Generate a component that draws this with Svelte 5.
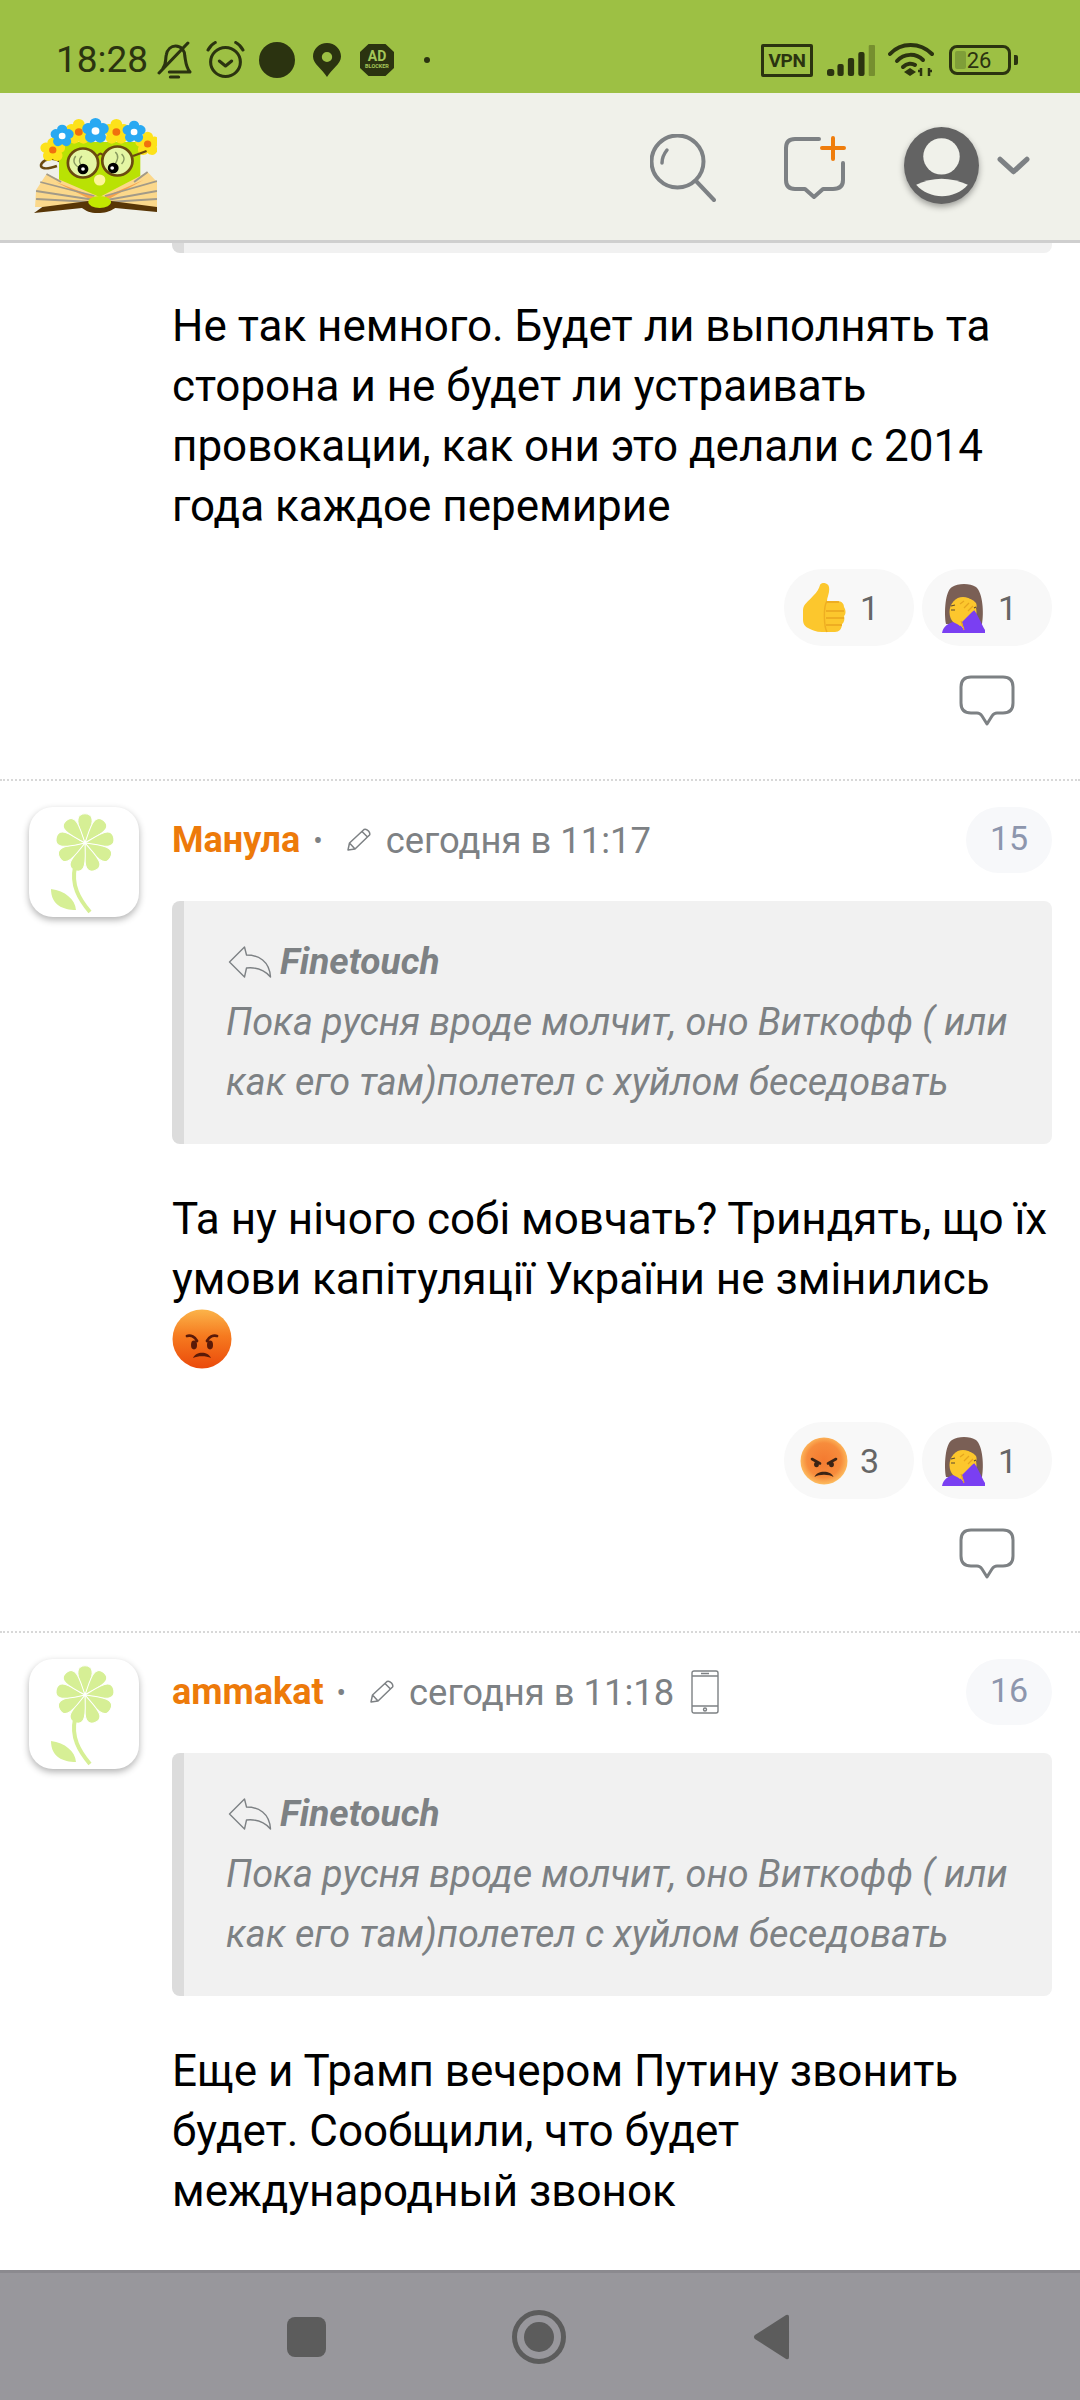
<script>
  const PETALS = [0, 40, 80, 120, 160, 200, 240, 280, 320];
  const comments = [
    {
      name: 'Манула', time: 'сегодня в 11:17', num: 15, phone: false,
      lines: ['Та ну нічого собі мовчать? Триндять, що їх', 'умови капітуляції України не змінились'],
      angry: true, first: 'pout', count: 3
    },
    {
      name: 'ammakat', time: 'сегодня в 11:18', num: 16, phone: true,
      lines: ['Еще и Трамп вечером Путину звонить', 'будет. Сообщили, что будет', 'международный звонок'],
      angry: false
    }
  ];
</script>

{#snippet thumbs()}
  <svg class="emo" viewBox="0 0 48 50">
    <path d="M3 27 C3 21 9 18 13 13 C17 9 19 6 20 2 C21 -1 28 -1 29 4 C30 10 27 14 27 18 L37 18 C42 18 44 21 44 24 C46 27 46 31 44 33 C45 36 44 40 42 41 C42 46 39 49 35 49 L22 49 C16 49 12 47 8 45 C4 43 3 40 3 36Z" fill="#fcc72d"/>
    <path d="M27 19 H39 M26 28 H44 M26 35 H44 M26 42 H42" stroke="#e9a51f" stroke-width="1.6" fill="none"/>
    <path d="M27 18 C23 24 24 44 27 49" stroke="#eeae22" stroke-width="1.4" fill="none"/>
  </svg>
{/snippet}

{#snippet facepalm()}
  <svg class="emo" viewBox="0 0 48 50">
    <path d="M8 41 C6 30 7 8 14 4 C20 0 32 0 38 4 C45 10 46 30 44 41Z" fill="#7a5f55"/>
    <ellipse cx="25" cy="29" rx="13.500" ry="15" fill="#fcc72d"/>
    <path d="M4 50 C5 44 9 41 15 39 L23 43 L30 50Z" fill="#7a3ff2"/>
    <path d="M27 50 L24 39 L36 27 C40 32 44 42 47 47 L47 50Z" fill="#7a3ff2"/>
    <path d="M17 19 C23 13 33 14 38 20 C40 25 37 27 33 29 L25 36 L22 43 C18 40 18 36 20 32 C17 28 16 23 17 19Z" fill="#fcc72d"/>
    <path d="M22 21 L26 18 M26 25 L31 20 M30 28 L35 23 M23 38 L26 47" stroke="#e6a51e" stroke-width="1.200" fill="none"/>
    <path d="M13 23 l4 -1 M13 27 h4 M36 25 l2 -1" stroke="#5b4a30" stroke-width="1.200"/>
  </svg>
{/snippet}

{#snippet pout()}
  <svg class="emo" viewBox="0 0 48 48">
    <defs>
      <radialGradient id="pg" cx="50%" cy="48%" r="52%">
        <stop offset="0%" stop-color="#f47a30"/><stop offset="70%" stop-color="#f78c3c"/><stop offset="100%" stop-color="#fdbd60"/>
      </radialGradient>
    </defs>
    <circle cx="24" cy="24" r="23.500" fill="url(#pg)"/>
    <path d="M12 22 L20 26.500 M36 22 L28 26.500" stroke="#3c2415" stroke-width="2.600" stroke-linecap="round"/>
    <ellipse cx="16.500" cy="27.500" rx="2.400" ry="2.800" fill="#3c2415"/><ellipse cx="31.500" cy="27.500" rx="2.400" ry="2.800" fill="#3c2415"/>
    <path d="M14.500 40 C17 33 31 33 33.500 40 C29 37 19 37 14.500 40Z" fill="#3c2415"/>
  </svg>
{/snippet}

{#snippet rage()}
  <svg class="rage" viewBox="0 0 60 60">
    <defs>
      <linearGradient id="rg" x1="0" y1="0" x2="0" y2="1">
        <stop offset="0%" stop-color="#fbb44a"/><stop offset="45%" stop-color="#f67a1f"/><stop offset="100%" stop-color="#ea4a0b"/>
      </linearGradient>
    </defs>
    <circle cx="30" cy="30" r="29.500" fill="url(#rg)"/>
    <path d="M15 27 C19 26 23 28 25 32 M45 27 C41 26 37 28 35 32" stroke="#5a1a08" stroke-width="2.800" fill="none" stroke-linecap="round"/>
    <ellipse cx="22" cy="36" rx="3" ry="4.400" fill="#5a1a08"/><ellipse cx="38" cy="36" rx="3" ry="4.400" fill="#5a1a08"/>
    <path d="M21 49 C24 42 36 42 39 49 C34 46.500 26 46.500 21 49Z" fill="#5a1a08"/>
  </svg>
{/snippet}

{#snippet pills(kind, count)}
  <div class="pills">
    <div class="pill">
      {#if kind === 'pout'}{@render pout()}{:else}{@render thumbs()}{/if}
      <span>{count}</span>
    </div>
    <div class="pill">{@render facepalm()}<span>1</span></div>
  </div>
  <div class="reply-row">
    <svg class="bubble" viewBox="0 0 56 52" fill="none" stroke="#7d8184" stroke-width="3">
      <path d="M12 2 H44 Q54 2 54 12 V28 Q54 38 44 38 H38 Q35 38 33 41 L28 49 L23 41 Q21 38 18 38 H12 Q2 38 2 28 V12 Q2 2 12 2Z" stroke-linejoin="round"/>
    </svg>
  </div>
{/snippet}

{#snippet pencil()}
  <svg class="pencil" viewBox="0 0 26 24" fill="none" stroke="#7d8184" stroke-width="1.500" stroke-linejoin="round">
    <path d="M2 22 L3.500 15 L18 1.500 Q20 0.500 22.500 3 Q24.500 5.500 23.500 7 L9 21 Z M3.500 15 L9 21 M16 3.500 L21.500 9"/>
  </svg>
{/snippet}

{#snippet flower()}
  <svg class="flower" viewBox="0 0 110 110">
    <g fill="#d6ef95">
      {#each PETALS as a}
        <path d="M56 36 C53 28 48 18 49 12 C50 5 62 5 63 12 C64 18 59 28 56 36Z" transform="rotate({a} 56 36)" stroke="#fff" stroke-width="1"/>
      {/each}
      <path d="M22 82 C36 84 46 92 47 103 C34 103 22 98 22 82Z"/>
    </g>
    <path d="M46 60 C42 78 50 92 61 105" stroke="#d6ef95" stroke-width="4" fill="none"/>
  </svg>
{/snippet}

{#snippet blossom(x, y, c, d, r)}
  <g>
    {#each [0, 72, 144, 216, 288] as a}
      <circle cx={x} cy={y - r} r={r * 0.75} fill={c} transform="rotate({a} {x} {y})"/>
    {/each}
    <circle cx={x} cy={y} r={r * 0.5} fill={d}/>
  </g>
{/snippet}

<div class="phone">
  <div class="status">
    <span class="time">18:28</span>
    <svg class="s-bell" viewBox="0 0 34 38" preserveAspectRatio="none" fill="none" stroke="#2b3310" stroke-width="3" stroke-linecap="round" stroke-linejoin="round">
      <path d="M6 27 C9 23 8 19 9 14 C10 8 14 5 18 5 C24 5 27 10 27 15 C28 21 28 26 32 31 H12"/>
      <path d="M2 32 L30 2"/>
      <path d="M13 36 H21"/>
    </svg>
    <svg class="s-alarm" viewBox="0 0 38 38" preserveAspectRatio="none" fill="none" stroke="#2b3310" stroke-width="3" stroke-linecap="round" stroke-linejoin="round">
      <circle cx="19" cy="21" r="14.500"/>
      <path d="M13 20 L19 25 L25 20"/>
      <path d="M2 9 C4 5 6 3 9 1.500 M36 9 C34 5 32 3 29 1.500"/>
    </svg>
    <div class="s-dot"></div>
    <svg class="s-pin" viewBox="0 0 27 34" preserveAspectRatio="none">
      <path fill-rule="evenodd" d="M13.500 0 C21 0 27 6 27 13.500 C27 21 18 26 13.500 34 C9 26 0 21 0 13.500 C0 6 6 0 13.500 0Z M13.500 9 A5 5 0 1 0 13.500 19 A5 5 0 1 0 13.500 9Z" fill="#2b3310"/>
    </svg>
    <div class="s-ad"><b>AD</b><i>BLOCKER</i></div>
    <div class="s-small"></div>
    <div class="s-space"></div>
    <div class="s-vpn">VPN</div>
    <svg class="s-sig" viewBox="0 0 46 31" preserveAspectRatio="none">
      <g fill="#2b3310">
        <rect x="0" y="24" width="7" height="7" rx="2.500"/>
        <rect x="10" y="19" width="6" height="12" rx="2"/>
        <rect x="20" y="13" width="6" height="18" rx="2"/>
        <rect x="30" y="7" width="6" height="24" rx="2"/>
      </g>
      <rect x="40" y="0" width="6" height="31" rx="1" fill="#768f2f"/>
    </svg>
    <svg class="s-wifi" viewBox="0 0 46 34" fill="none" stroke="#2b3310" stroke-width="4" stroke-linecap="round">
      <path d="M2 11 C13 -1 32 -1 44 11"/>
      <path d="M9 18 C16 10 28 10 35 17"/>
      <path d="M15 24 C19 20 24 20 27 22"/>
      <path d="M16 29 L22 25 L28 29 L22 33Z" fill="#2b3310" stroke="none"/>
      <path d="M33 25 V33 M30 28 H33 M41 25 V33 M41 28 H44" stroke-width="2.500" stroke-linecap="butt"/>
    </svg>
    <div class="s-bat">
      <div class="s-body"><div class="s-fill"></div><span>26</span></div>
      <div class="s-nub"></div>
    </div>
  </div>

  <header class="top">
    <svg class="logo" viewBox="34 113 118 96" preserveAspectRatio="none">
      <path d="M60 158 C44 146 28 172 56 162" fill="none" stroke="#6b4a10" stroke-width="2.500"/>
      <rect x="58" y="138" width="78" height="52" fill="#b9e204"/>
      <path d="M58 185 L97 198 L136 185 V172 L97 190 L58 172Z" fill="#b9e204"/>
      {@render blossom(52, 146, '#fde21a', '#f0700e', 7)}
      {@render blossom(143, 140, '#fde21a', '#f0700e', 7)}
      {@render blossom(77, 128, '#fde21a', '#f0700e', 7.500)}
      {@render blossom(113, 128, '#fde21a', '#f0700e', 7.500)}
      {@render blossom(61, 132, '#29a9f2', '#fff', 6.500)}
      {@render blossom(93, 127, '#29a9f2', '#fff', 7.500)}
      {@render blossom(130, 128, '#29a9f2', '#fff', 6.500)}
      <g stroke="#6b4a10" stroke-width="2.600" fill="#e4f6a4">
        <circle cx="81" cy="159" r="14.500"/><circle cx="114" cy="157" r="14.500"/>
      </g>
      <path d="M95 152 Q97 148 100 151 M129 152 L142 147" stroke="#6b4a10" stroke-width="2.200" fill="none"/>
      <path d="M74 152 C70 158 74 162 78 164 M80 152 C76 156 78 160 80 162 M112 148 C116 152 114 156 112 160 M118 150 C122 154 120 158 118 160" stroke="#889a60" stroke-width="1.400" fill="none"/>
      <circle cx="81" cy="165" r="5.200" fill="#000"/><circle cx="81" cy="165" r="1.800" fill="#fff"/>
      <circle cx="110" cy="164" r="5.200" fill="#000"/><circle cx="109" cy="164" r="1.800" fill="#fff"/>
      <circle cx="97" cy="176" r="5.500" fill="#fdf59a"/>
      <path d="M46 170 L97 193 L97 203 L35 203 L36 186Z M143 168 L152 178 L152 203 L97 203 L97 193Z" fill="#fbd88b"/>
      <path d="M55 178 L97 195 L139 176 L97 200Z" fill="#f6a24c"/>
      <path d="M40 178 L92 192 M36 187 L92 196 M36 195 L90 198 M152 177 L102 192 M152 187 L104 196 M152 195 L106 198 M46 170 L60 178 M143 168 L130 178" stroke="#a29a88" stroke-width="1.800"/>
      <path d="M34 209 L42 203 L86 197 L108 197 L152 203 L152 208 L112 204 C106 208 102 209 95 209 C88 209 84 207 80 204Z" fill="#583606"/>
      <ellipse cx="97" cy="198" rx="11" ry="6" fill="#c2e800"/>
    </svg>
    <div class="h-space"></div>
    <svg class="search" viewBox="0 0 66 68" fill="none" stroke="#7d8184" stroke-width="4" stroke-linecap="round">
      <circle cx="27.500" cy="27.500" r="26"/>
      <path d="M46 47 L64 66"/>
      <path d="M12 29 C12 24 13 21 17 16" stroke-width="3.500"/>
    </svg>
    <svg class="newc" viewBox="0 0 62 64" fill="none" stroke-linecap="round">
      <path d="M36 3 H12 Q3 3 3 12 V44 Q3 53 12 53 H22 L31 61 L40 53 H50 Q60 53 60 44 V27" stroke="#7d8184" stroke-width="4" stroke-linejoin="round"/>
      <path d="M39 12 H61 M50 2 V23" stroke="#ef7d0c" stroke-width="4"/>
    </svg>
    <div class="ava">
      <svg viewBox="0 0 74 76">
        <ellipse cx="37" cy="38" rx="37" ry="38" fill="#636363"/>
        <circle cx="37" cy="29" r="18" fill="#f0f1ea"/>
        <path d="M12 57 C28 49 46 49 63 57 C50 72 25 72 12 57Z" fill="#f0f1ea"/>
      </svg>
    </div>
    <svg class="chev" viewBox="0 0 32 18" fill="none" stroke="#7d8184" stroke-width="5" stroke-linecap="round" stroke-linejoin="round">
      <path d="M3 3 L16 15 L29 3"/>
    </svg>
  </header>

  <main class="feed">
    <div class="stub"></div>
    <div class="body first">
      <p>Не так немного. Будет ли выполнять та</p>
      <p>сторона и не будет ли устраивать</p>
      <p>провокации, как они это делали с 2014</p>
      <p>года каждое перемирие</p>
    </div>
    <div class="foot">{@render pills('thumb', 1)}</div>

    {#each comments as c}
      <article class="comment">
        <div class="side"><div class="uava">{@render flower()}</div></div>
        <div class="main">
          <div class="meta">
            <span class="name">{c.name}</span>
            <span class="sep">•</span>
            {@render pencil()}
            <span class="when">{c.time}</span>
            {#if c.phone}
              <svg class="mob" viewBox="0 0 28 44" fill="none" stroke="#7d8184" stroke-width="1.400">
                <rect x="1" y="1" width="26" height="42" rx="2"/>
                <path d="M1 6 H27 M1 36 H27 M10 3.500 H18"/><circle cx="14" cy="39.500" r="1.500"/>
              </svg>
            {/if}
            <span class="num">{c.num}</span>
          </div>
          <div class="quote">
            <div class="q-head">
              <svg class="q-ico" viewBox="0 0 43 32" fill="none" stroke="#7d8184" stroke-width="1.400" stroke-linejoin="round">
                <path d="M1 16 L16 1 L18 9 C30 9 41 15 42 31 C36 24 28 21 18 22 L16 31Z"/>
              </svg>
              <b>Finetouch</b>
            </div>
            <div>Пока русня вроде молчит, оно Виткофф ( или</div>
            <div>как его там)полетел с хуйлом беседовать</div>
          </div>
          <div class="body">
            {#each c.lines as l}<p>{l}</p>{/each}
            {#if c.angry}<p class="rage-line">{@render rage()}</p>{/if}
          </div>
          {#if c.first}<div class="foot inner">{@render pills(c.first, c.count)}</div>{/if}
        </div>
      </article>
    {/each}
  </main>

  <nav class="nav">
    <div class="n-sq"></div>
    <div class="n-home"><div></div></div>
    <svg class="n-back" viewBox="0 0 38 46" preserveAspectRatio="none"><path d="M2 21 L34 1 Q37 0 37 3 V43 Q37 46 34 45 L2 25 Q0 23 2 21Z" fill="#5c5c5c"/></svg>
  </nav>
</div>

<style>
  :global(body) { margin: 0; background: #fff; }
  .phone {
    width: 1080px; height: 2400px; overflow: hidden; display: flex; flex-direction: column;
    font-family: Roboto, "Noto Sans", sans-serif; background: #fff; color: #000;
  }
  .status {
    height: 93px; flex: none; background: #9dc044; display: flex; align-items: center;
    padding: 27px 0 0 56px; box-sizing: border-box; color: #2b3310;
  }
  .time { font-size: 37px; width: 92px; line-height: 40px; }
  .s-bell { width: 35px; height: 38px; margin-left: 9px; }
  .s-alarm { width: 39px; height: 38px; margin-left: 14px; }
  .s-dot { width: 36px; height: 36px; border-radius: 50%; background: #2b3310; margin-left: 14px; }
  .s-pin { width: 28px; height: 34px; margin-left: 18px; }
  .s-ad {
    width: 34px; height: 32px; margin-left: 19px; background: #2b3310;
    clip-path: polygon(25% 0, 75% 0, 100% 25%, 100% 75%, 75% 100%, 25% 100%, 0 75%, 0 25%);
    display: flex; flex-direction: column; align-items: center; justify-content: center; color: #a4c758; line-height: 1;
  }
  .s-ad b { font-size: 14px; line-height: 13px; }
  .s-ad i { font-size: 5.500px; font-style: normal; font-weight: 700; line-height: 7px; }
  .s-small { width: 6px; height: 6px; border-radius: 50%; background: #2b3310; margin-left: 30px; }
  .s-space { flex: 1; }
  .s-vpn {
    width: 52px; height: 33px; box-sizing: border-box; border: 3px solid #2b3310; border-radius: 2px;
    font-size: 19px; font-weight: 700; text-align: center; line-height: 27px; letter-spacing: -0.3px;
  }
  .s-sig { width: 48px; height: 31px; margin-left: 14px; }
  .s-wifi { width: 46px; height: 34px; margin-left: 13px; }
  .s-bat { display: flex; align-items: center; margin: 0 62px 0 15px; }
  .s-body {
    width: 62px; height: 30px; box-sizing: border-box; border: 3px solid #2b3310; border-radius: 8px;
    position: relative; text-align: center; font-size: 22px; line-height: 25px;
  }
  .s-fill { position: absolute; left: 3px; top: 3px; bottom: 3px; width: 11px; background: #7f9e38; border-radius: 2px; }
  .s-body span { position: relative; left: -1px; }
  .s-nub { width: 4px; height: 10px; background: #2b3310; border-radius: 0 2px 2px 0; margin-left: 3px; }

  .top {
    height: 150px; flex: none; box-sizing: border-box; background: #f0f1ea; border-bottom: 3px solid #cfcfcf;
    display: flex; align-items: center; padding: 0 50px 0 34px;
  }
  .logo { width: 123px; height: 96px; margin-top: -3px; }
  .h-space { flex: 1; }
  .search { width: 66px; height: 68px; margin-top: 2px; }
  .newc { width: 62px; height: 64px; overflow: visible; margin-left: 67px; margin-top: 2px; }
  .ava { width: 77px; height: 77px; margin-left: 58px; filter: drop-shadow(0 3px 3px rgba(0,0,0,.35)); margin-top: -3px; }
  .ava svg { width: 77px; height: 77px; display: block; }
  .chev { width: 33px; height: 19px; margin-left: 17px; margin-top: -2px; }

  .feed { flex: 1; overflow: hidden; min-height: 0; }
  .stub {
    height: 10px; margin: 0 28px 0 172px; background: #f1f1f1; border-left: 12px solid #dcdcdc;
    border-radius: 0 0 8px 8px;
  }
  .body { font-size: 44px; line-height: 60px; }
  .body p { margin: 0; }
  .body.first { padding: 43px 28px 0 172px; }
  .foot { padding: 33px 28px 0 172px; height: 243px; box-sizing: border-box; }
  .foot.inner { padding: 0; margin-top: 53px; height: auto; }
  .pills { display: flex; justify-content: flex-end; gap: 8px; }
  .pill {
    width: 130px; height: 77px; border-radius: 38px; background: #f8f8f8; display: flex; align-items: center;
    box-sizing: border-box; padding-left: 16px; gap: 12px; font-size: 34px; color: #666;
  }
  .emo { width: 48px; height: 50px; }
  .reply-row { display: flex; justify-content: flex-end; padding: 29px 37px 0 0; }
  .bubble { width: 56px; height: 52px; }

  .comment {
    display: flex; box-sizing: border-box; height: 852px; padding: 26px 28px 0 29px;
    border-top: 2px dotted #d8d8d8;
  }
  .side { width: 143px; flex: none; }
  .uava {
    width: 110px; height: 110px; border-radius: 24px; background: #fff;
    box-shadow: 0 3px 7px rgba(0,0,0,.3);
  }
  .flower { width: 110px; height: 110px; display: block; }
  .main { flex: 1; min-width: 0; }
  .meta { display: flex; align-items: center; height: 66px; font-size: 36.400px; color: #7d8184; }
  .name { color: #ed7a0a; font-weight: 700; font-size: 36px; }
  .sep { margin-left: 13px; font-size: 28px; }
  .pencil { width: 26px; height: 24px; margin-left: 23px; }
  .when { margin-left: 14px; }
  .mob { width: 28px; height: 44px; margin-left: 17px; }
  .num {
    margin-left: auto; width: 86px; height: 66px; border-radius: 33px; background: #f7f8fa; text-align: center;
    line-height: 62px; font-size: 34px; color: #8d96ad;
  }
  .quote {
    margin-top: 28px; height: 243px; box-sizing: border-box; background: #f1f1f1; border-left: 12px solid #dcdcdc;
    border-radius: 8px; padding: 31px 20px 0 42px; font-size: 37.800px; line-height: 60px; font-style: italic; color: #7d8184;
  }
  .q-head { display: flex; align-items: center; height: 60px; }
  .q-head b { font-weight: 700; font-size: 37px; }
  .q-ico { width: 44px; height: 32px; margin: 0 8px 0 2px; }
  .quote + .body { margin-top: 45px; }
  .rage-line { height: 60px; display: flex; align-items: center; }
  .rage { width: 60px; height: 60px; }
  .n-sq { width: 39px; height: 40px; border-radius: 8px; background: #5c5c5c; }
  .nav {
    height: 130px; flex: none; box-sizing: border-box; background: #98979c; border-top: 3px solid #8b8a8f;
    display: flex; align-items: center; padding: 0 0 0 287px;
  }
  .n-home {
    width: 54px; height: 54px; border-radius: 50%; box-sizing: border-box; border: 5px solid #5c5c5c;
    margin-left: 186px; display: flex; align-items: center; justify-content: center;
  }
  .n-home div { width: 30px; height: 30px; border-radius: 50%; background: #5c5c5c; }
  .n-back { width: 37px; height: 46px; margin-left: 187px; }
</style>
